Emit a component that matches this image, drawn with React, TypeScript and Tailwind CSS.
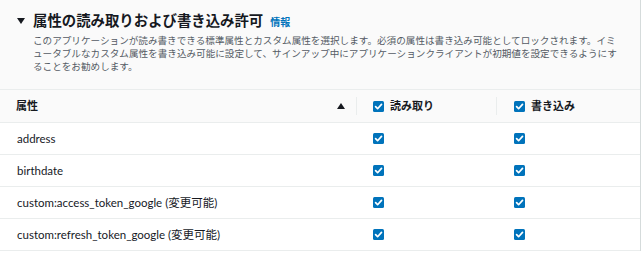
import React from "react";

const rows = [
  "address",
  "birthdate",
  "custom:access_token_google (変更可能)",
  "custom:refresh_token_google (変更可能)",
];

function Check() {
  return (
    <svg width="11" height="11" viewBox="0 0 11 11" className="shrink-0">
      <rect x="0" y="0" width="11" height="11" rx="1.5" fill="#0073bb" />
      <path d="M2.6 5.7 L4.6 7.7 L8.5 3.4" fill="none" stroke="#fff" strokeWidth="1.7" strokeLinecap="round" strokeLinejoin="round" />
    </svg>
  );
}

export default function App() {
  return (
    <div
      className="w-[641px] border-r border-[#d5dbdb] bg-white text-[#16191f]"
      style={{ fontFamily: 'Lato, "Noto Sans CJK JP", sans-serif' }}
    >
      <div className="h-[90px] bg-[#fafafa] border-b border-[#eaeded] pl-[17px] pt-[11px]">
        <div className="flex items-center h-[20px]">
          <svg width="8" height="6" viewBox="0 0 8 6" className="mr-[8px]">
            <path d="M0 0 H8 L4 6 Z" fill="#16191f" />
          </svg>
          <h2 className="text-[14.4px] font-bold leading-[20px]">属性の読み取りおよび書き込み許可</h2>
          <a className="ml-[7px] text-[10px] font-bold text-[#0073bb] leading-[20px] mt-[2px]">情報</a>
        </div>
        <p className="ml-[16px] mt-[3px] text-[9.6px] leading-[13px] text-[#545b64] whitespace-nowrap">
          このアプリケーションが読み書きできる標準属性とカスタム属性を選択します。必須の属性は書き込み可能としてロックされます。イミ
          <br />
          ュータブルなカスタム属性を書き込み可能に設定して、サインアップ中にアプリケーションクライアントが初期値を設定できるようにす
          <br />
          ることをお勧めします。
        </p>
      </div>

      <div className="grid grid-cols-[357px_140px_1fr] h-[33px] bg-[#fafafa] border-b border-[#eaeded] text-[11px] font-bold">
        <div className="flex items-center justify-between pl-[16px] pr-[12px] relative">
          <span>属性</span>
          <svg width="8" height="6" viewBox="0 0 8 6">
            <path d="M4 0 L8 6 H0 Z" fill="#16191f" />
          </svg>
          <span className="absolute right-0 top-[7px] h-[18px] w-px bg-[#eaeded]" />
        </div>
        <div className="flex items-center gap-[6px] pl-[16px] relative">
          <Check />
          <span>読み取り</span>
          <span className="absolute right-0 top-[7px] h-[18px] w-px bg-[#eaeded]" />
        </div>
        <div className="flex items-center gap-[6px] pl-[17px]">
          <Check />
          <span>書き込み</span>
        </div>
      </div>

      {rows.map((r) => (
        <div
          key={r}
          className="grid grid-cols-[357px_140px_1fr] h-[32px] border-b border-[#eaeded] text-[11.5px]"
        >
          <div className="flex items-center pl-[17px]">{r}</div>
          <div className="flex items-center pl-[16px]">
            <Check />
          </div>
          <div className="flex items-center pl-[17px]">
            <Check />
          </div>
        </div>
      ))}
    </div>
  );
}
